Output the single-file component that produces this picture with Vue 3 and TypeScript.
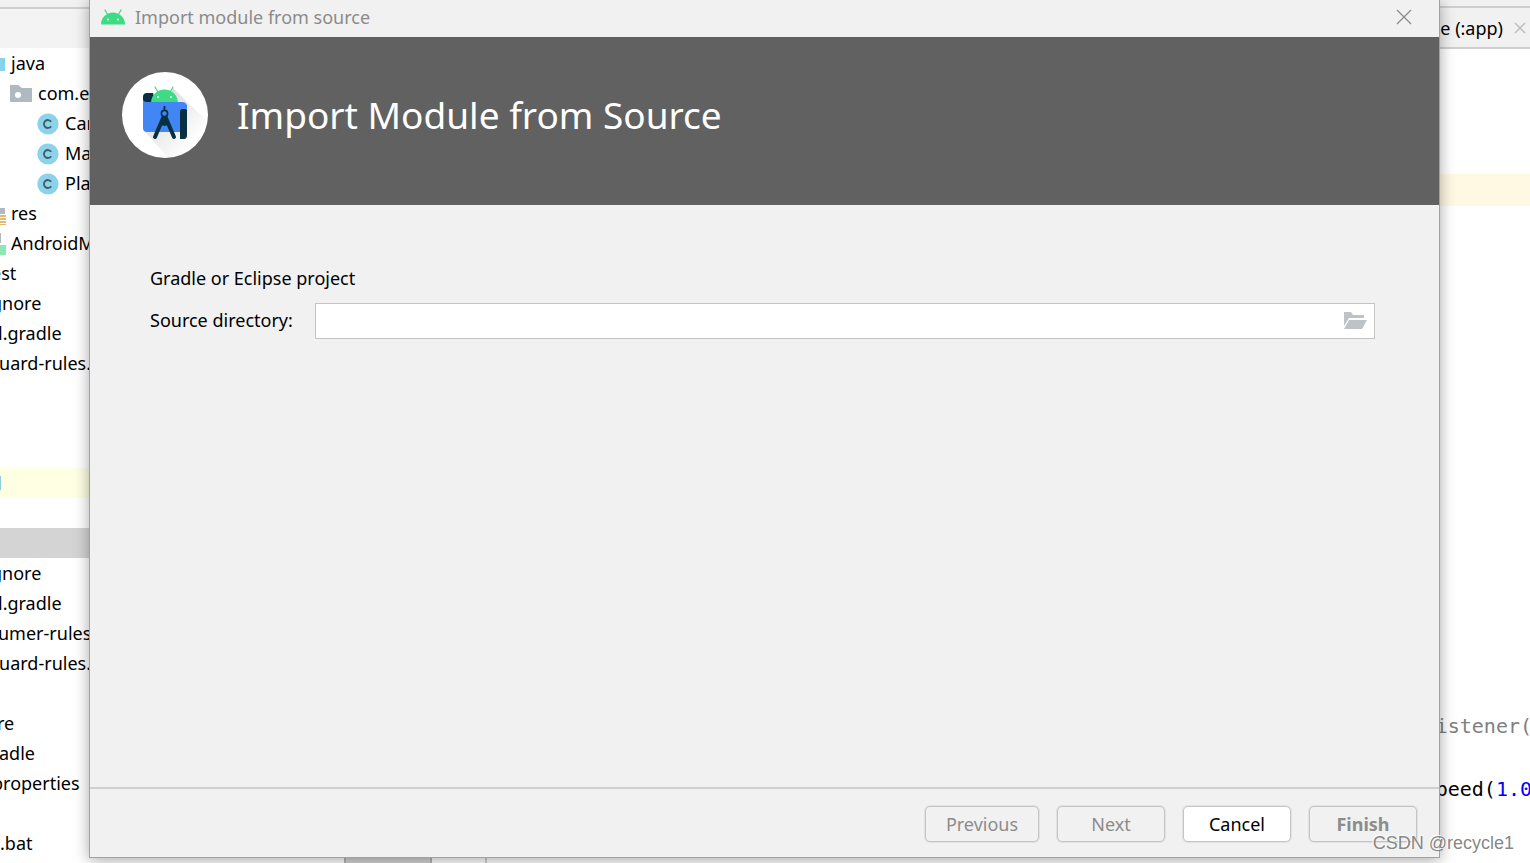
<script setup lang="ts">
import { ref } from 'vue'

type Icon = 'folder' | 'package' | 'class' | 'res' | 'manifest'

interface TreeRow {
  label: string
  start: number
  icon?: Icon
  state?: 'excluded' | 'selected'
}

const rows: TreeRow[] = [
  { label: 'java', start: 11, icon: 'folder' },
  { label: 'com.example', start: 38, icon: 'package' },
  { label: 'Car', start: 65, icon: 'class' },
  { label: 'MainActivity', start: 65, icon: 'class' },
  { label: 'PlayActivity', start: 65, icon: 'class' },
  { label: 'res', start: 11, icon: 'res' },
  { label: 'AndroidManifest', start: 11, icon: 'manifest' },
  { label: 'est', start: -9 },
  { label: 'gnore', start: -9 },
  { label: 'l.gradle', start: -2 },
  { label: 'guard-rules.pro', start: -12 },
  { label: '', start: 0 },
  { label: '', start: 0 },
  { label: '', start: 0 },
  { label: 'l', start: -3, state: 'excluded' },
  { label: '', start: 0 },
  { label: '', start: 0, state: 'selected' },
  { label: 'gnore', start: -9 },
  { label: 'l.gradle', start: -2 },
  { label: 'umer-rules', start: -2 },
  { label: 'guard-rules.pro', start: -12 },
  { label: '', start: 0 },
  { label: 're', start: -3 },
  { label: 'adle', start: -1 },
  { label: 'properties', start: -8 },
  { label: '', start: 0 },
  { label: '.bat', start: 0 },
]

const directory = ref('')
</script>

<template>
  <div class="ide">
    <aside class="project">
      <div class="project-head"></div>
      <ul class="tree">
        <li v-for="(row, i) in rows" :key="i" class="row" :class="row.state">
          <span class="node" :style="{ marginLeft: row.start + 'px' }">
            <svg v-if="row.icon === 'folder'" class="icon" viewBox="0 0 24 24">
              <path d="M0 4h8l3 3h11v13H0z" fill="#87d3ec" />
            </svg>
            <svg v-else-if="row.icon === 'package'" class="icon" viewBox="0 0 24 24">
              <path d="M0 4h8l4 3h10v14H0z" fill="#afb9c0" />
              <circle cx="8" cy="14" r="3" fill="#fff" />
            </svg>
            <svg v-else-if="row.icon === 'class'" class="icon" viewBox="0 0 24 24">
              <circle cx="11" cy="13" r="10.600" fill="#8bd3eb" />
              <path d="M14.200 10.700A4 4 0 1 0 14.200 15.300" fill="none" stroke="#435b66" stroke-width="1.800" />
            </svg>
            <svg v-else-if="row.icon === 'res'" class="icon" viewBox="0 0 24 24">
              <path d="M0 7h22v6H0z" fill="#afb9c0" />
              <path d="M12 15h11M12 18h11M12 21h11M12 24h11" stroke="#d8a343" stroke-width="1.500" />
            </svg>
            <svg v-else-if="row.icon === 'manifest'" class="icon" viewBox="0 0 24 24">
              <path d="M4 2h14v10H4z" fill="#afb9c0" />
              <path d="M8 14h15v10H8z" fill="#8ce8b2" />
            </svg>
            {{ row.label }}
          </span>
        </li>
      </ul>
    </aside>

    <section class="editor">
      <div class="tabs">
        <span>e (:app)</span>
        <svg class="tab-close" viewBox="0 0 12 12"><path d="M1 1l10 10M11 1L1 11" stroke="#b9bfc3" stroke-width="1.500" /></svg>
      </div>
      <div class="code">
        <div class="current-line"></div>
        <code class="line hint">istener(</code>
        <code class="line">peed(<span class="num">1.0</span></code>
      </div>
      <div class="gutter"><span class="gutter-tab"></span><span class="gutter-rest"></span></div>
    </section>

    <form class="dialog" role="dialog" aria-labelledby="dialog-title" @submit.prevent>
      <div class="titlebar">
        <svg class="android" viewBox="0 0 24 16">
          <path d="M4 1l3 5M20 1l-3 5" stroke="#3ddc84" stroke-width="1.300" stroke-linecap="round" />
          <path d="M0 15.500a12 12 0 0 1 24 0z" fill="#3ddc84" />
          <circle cx="7" cy="10.500" r="1" fill="#fff" /><circle cx="17" cy="10.500" r="1" fill="#fff" />
        </svg>
        <span id="dialog-title">Import module from source</span>
        <button class="close" type="button" aria-label="Close">
          <svg viewBox="0 0 16 16"><path d="M1 1l14 14M15 1L1 15" stroke="#8b8b8b" stroke-width="1.300" /></svg>
        </button>
      </div>

      <header class="banner">
        <svg class="logo" viewBox="0 0 86 86">
          <defs>
            <linearGradient id="cast" x1="0" y1="0" x2="1" y2="1">
              <stop offset="0.200" stop-color="#dcdcdc" />
              <stop offset="0.800" stop-color="#fff" />
            </linearGradient>
          </defs>
          <circle cx="43" cy="43" r="43" fill="#fff" />
          <path d="M51 16l34 33A43 43 0 0 1 46 85L22 59z" fill="url(#cast)" />
          <path d="M31 21H25a4 4 0 0 0-4 4v3q0 3 3 3h10z" fill="#073042" />
          <path d="M33 15l3 5M51 15l-3 5" stroke="#3ddc84" stroke-width="1.200" stroke-linecap="round" />
          <path d="M29 31a13.500 13.500 0 0 1 27 0z" fill="#3ddc84" />
          <circle cx="36" cy="25" r="1" fill="#fff" /><circle cx="49" cy="25" r="1" fill="#fff" />
          <path d="M58 38l3-4 4-1v30q0 4-3 4h-4z" fill="#073042" />
          <path d="M21 28q1 2 4 2h35q5 0 5 5v3q-1-1-3-1h-2q-2 0-2 2v21H25q-4 0-4-4z" fill="#4285f4" />
          <path d="M42.500 34v5" stroke="#073042" stroke-width="1.800" />
          <path d="M42.500 45l4 7q-4 4-8 0z" fill="#073042" />
          <path d="M41.500 45L33 65M43.500 45l8.500 20" stroke="#073042" stroke-width="4" stroke-linecap="round" />
          <circle cx="42.500" cy="41.500" r="3.100" fill="#4285f4" stroke="#073042" stroke-width="1.600" />
        </svg>
        <h1>Import Module from Source</h1>
      </header>

      <main class="content">
        <p>Gradle or Eclipse project</p>
        <div class="field">
          <label for="source">Source directory:</label>
          <div class="box">
            <input id="source" v-model="directory" type="text" />
            <button class="browse" type="button" aria-label="Browse">
              <svg viewBox="0 0 24 18">
                <path d="M1 0h7l2 3h11v3H6l-5 8z" fill="#bdc3c7" />
                <path d="M6 8h18l-5 9H1z" fill="#bdc3c7" />
              </svg>
            </button>
          </div>
        </div>
      </main>

      <footer class="actions">
        <button class="wide" type="button" disabled>Previous</button>
        <button type="button" disabled>Next</button>
        <button type="button">Cancel</button>
        <button class="finish" type="submit" disabled>Finish</button>
      </footer>
    </form>

    <div class="watermark">CSDN @recycle1</div>
  </div>
</template>

<style>
body {
  margin: 0;
}
</style>

<style scoped>
.ide {
  position: relative;
  display: flex;
  height: 100vh;
  overflow: hidden;
  background: #fff;
  color: #000;
  font: 18px/30px "Noto Sans", sans-serif;
}
.ide * {
  box-sizing: border-box;
}
.project {
  width: 344px;
  overflow: hidden;
}
.project-head {
  height: 48px;
  background: linear-gradient(#f1f1f1 7px, #cfcfcf 7px, #cfcfcf 9px, #f3f3f3 9px);
}
.tree {
  margin: 0;
  padding: 0;
  list-style: none;
}
.row {
  display: flex;
  height: 30px;
  white-space: nowrap;
}
.excluded {
  background: #ffffe4;
}
.selected {
  background: #d4d4d4;
}
.node {
  position: relative;
}
.icon {
  position: absolute;
  right: 100%;
  top: 3px;
  width: 24px;
  height: 24px;
  margin-right: 4px;
}
.editor {
  flex: 1;
  display: flex;
  flex-direction: column;
  overflow: hidden;
}
.tabs {
  display: flex;
  align-items: center;
  justify-content: flex-end;
  gap: 11px;
  height: 49px;
  padding: 8px 4px 0 0;
  border-bottom: 2px solid #cfcfcf;
  background: linear-gradient(#f1f1f1 6px, #cfcfcf 6px, #cfcfcf 8px, #f1f1f1 8px);
}
.tab-close {
  width: 12px;
  height: 12px;
}
.code {
  flex: 1;
  display: flex;
  flex-direction: column;
  padding-top: 125px;
}
.current-line {
  height: 32px;
  margin-bottom: 504px;
  background: #fff9e3;
}
.line {
  height: 32px;
  margin: 0 -2px 31px 0;
  text-align: right;
  font: 20px/32px "DejaVu Sans Mono", monospace;
}
.hint {
  color: #808080;
}
.num {
  color: #0000ff;
}
.gutter {
  display: flex;
  flex: none;
  height: 10px;
}
.gutter-tab {
  width: 88px;
  border: solid #b5b5b5;
  border-width: 0 2px;
  background: #d4d4d4;
}
.gutter-rest {
  width: 55px;
  border-right: 2px solid #cfcfcf;
}
.dialog {
  position: absolute;
  inset: 0 90px 5px 89px;
  display: flex;
  flex-direction: column;
  border: 1px solid #a2a2a2;
  border-top: 0;
  background: #f1f1f1;
  box-shadow: 0 2px 14px rgba(0, 0, 0, 0.35);
}
.titlebar {
  display: flex;
  align-items: center;
  gap: 10px;
  height: 37px;
  padding: 0 27px 4px 11px;
  color: #8b8b8b;
}
.android {
  width: 24px;
  height: 16px;
}
.close {
  width: 16px;
  height: 16px;
  margin-left: auto;
  padding: 0;
  border: 0;
  background: none;
}
.close svg,
.browse svg {
  display: block;
  width: 100%;
}
.banner {
  display: flex;
  align-items: center;
  gap: 29px;
  height: 168px;
  padding: 0 32px 12px;
  background: #616161;
  color: #fff;
}
.logo {
  width: 86px;
  height: 86px;
}
h1 {
  margin: 0;
  font-size: 37px;
  font-weight: 400;
  line-height: 52px;
}
.content {
  flex: 1;
  padding: 58px 64px 0 60px;
}
p {
  margin: 0;
}
.field {
  display: flex;
  align-items: center;
  margin-top: 10px;
}
.field label {
  width: 165px;
  padding-bottom: 2px;
}
.box {
  display: flex;
  align-items: center;
  flex: 1;
  height: 36px;
  padding-right: 7px;
  border: 1px solid #c4c4c4;
  background: #fff;
}
.box input {
  flex: 1;
  min-width: 0;
  height: 32px;
  padding: 0 8px;
  border: 0;
  outline: 0;
  background: none;
  font: inherit;
}
.browse {
  width: 24px;
  padding: 0;
  border: 0;
  background: none;
}
.actions {
  display: flex;
  justify-content: flex-end;
  gap: 18px;
  padding: 17px 22px 15px;
  border-top: 2px solid #cfcfcf;
}
.actions button {
  width: 108px;
  height: 36px;
  padding: 0;
  border: 1px solid #c4c4c4;
  border-radius: 5px;
  background: #fff;
  box-shadow: 0 0 0 1px #e2e2e2;
  color: #000;
  font: inherit;
}
.actions button:disabled {
  background: #f1f1f1;
  color: #8c8c8c;
}
.actions .wide {
  width: 114px;
}
.actions .finish {
  font-weight: 700;
}
.watermark {
  position: absolute;
  right: 16px;
  bottom: 5px;
  color: rgba(120, 120, 120, 0.9);
  font-family: "Liberation Sans", Arial, sans-serif;
  text-shadow: -1px -1px 0 #fff;
}
</style>
